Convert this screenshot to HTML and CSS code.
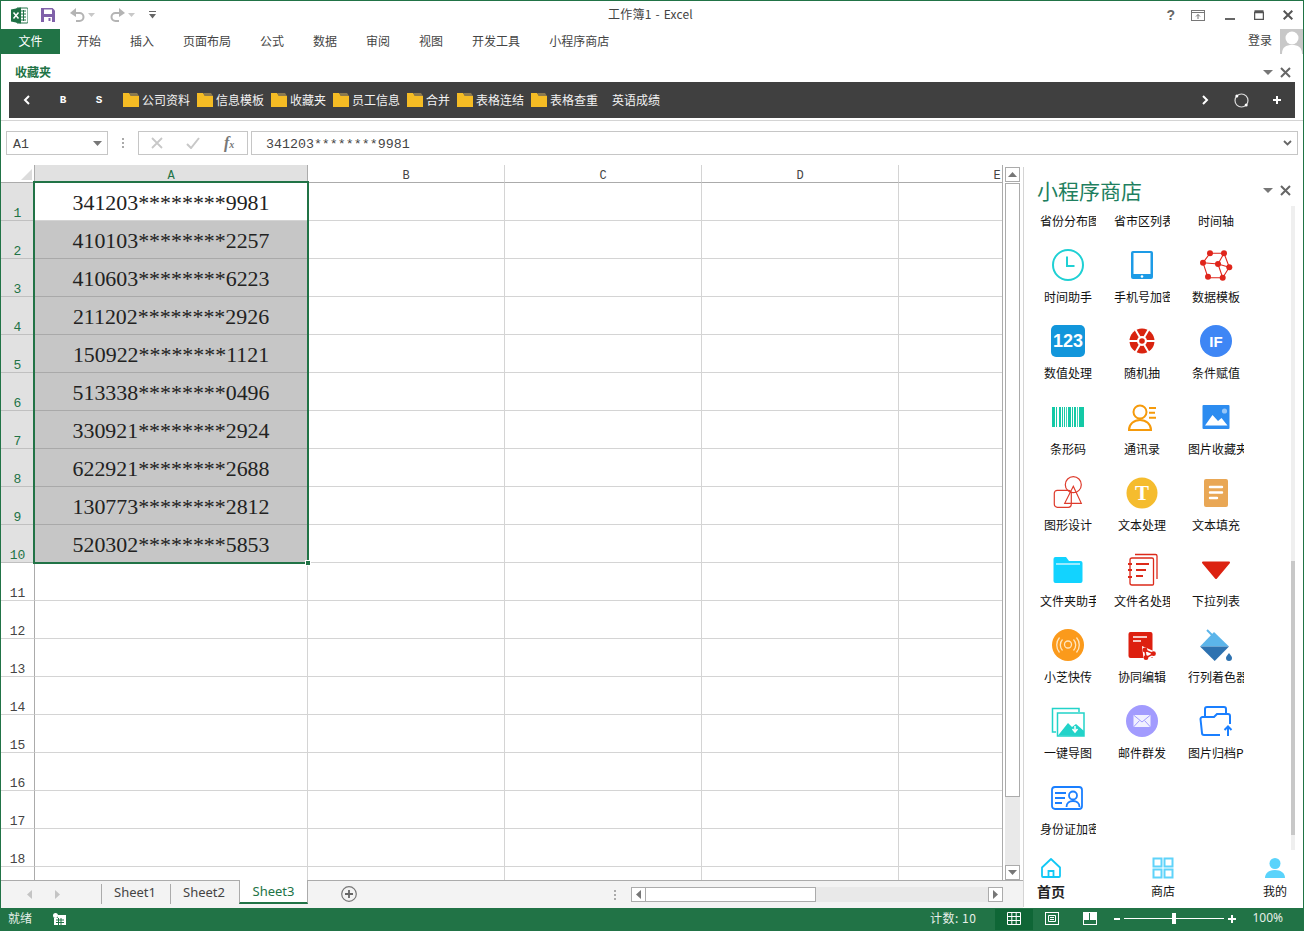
FILE: index.html
```html
<!DOCTYPE html>
<html lang="zh-CN">
<head>
<meta charset="utf-8">
<title>工作簿1 - Excel</title>
<link rel="stylesheet" href="styles.css">
</head>
<body>
<div class="app">
  <header class="titlebar">
    <div class="qat">
      <svg class="xl" width="17" height="17" viewBox="0 0 17 17"><path d="M6 1h10a1 1 0 0 1 1 1v13a1 1 0 0 1-1 1H6z" fill="#fff" stroke="#217346"/><path d="M10 4h5M10 7h5M10 10h5M10 13h5M12.5 3v11" stroke="#217346" fill="none"/><path d="M0 2.500 10 .5v16L0 14.500z" fill="#1e7145"/><path d="M2.500 5.500 7.500 11.500M7.500 5.500 2.500 11.500" stroke="#fff" stroke-width="1.500"/></svg>
      <svg class="save" width="14" height="14" viewBox="0 0 14 14"><path d="M0 0h11.500L14 2.500V14H0z" fill="#8061a9"/><rect x="3" y="1.500" width="8" height="4.500" fill="#fff"/><rect x="3" y="9" width="8" height="5" fill="#fff"/><rect x="7.500" y="10" width="2" height="3" fill="#8061a9"/></svg>
      <svg class="undo" width="15" height="14" viewBox="0 0 15 14"><path d="M3 5h6.500a4 4 0 0 1 0 8H6" fill="none" stroke="#b4b4b4" stroke-width="2"/><path d="M6 0v9L0 5z" fill="#b4b4b4"/></svg>
      <svg class="drop" width="7" height="4" viewBox="0 0 7 4"><path d="M0 0h7L3.500 4z" fill="#c8c8c8"/></svg>
      <svg class="redo" width="15" height="14" viewBox="0 0 15 14"><path d="M12 5H5.500a4 4 0 0 0 0 8H9" fill="none" stroke="#b4b4b4" stroke-width="2"/><path d="M9 0v9l6-4z" fill="#b4b4b4"/></svg>
      <svg class="drop" width="7" height="4" viewBox="0 0 7 4"><path d="M0 0h7L3.500 4z" fill="#c8c8c8"/></svg>
      <svg class="custom" width="7" height="8" viewBox="0 0 7 8"><path d="M0 0h7v1H0zM0 3h7L3.500 7.500z" fill="#666"/></svg>
    </div>
    <div class="doc-title">工作簿1 - Excel</div>
    <div class="win-ctrl">
      <span class="help">?</span>
      <svg class="ribbon-ico" width="14" height="11" viewBox="0 0 14 11"><rect x=".5" y=".5" width="13" height="10" fill="none" stroke="#777"/><path d="M.5 2.500h13M7 9V4.500M5 6.500l2-2 2 2" fill="none" stroke="#777"/></svg>
      <svg width="10" height="11" viewBox="0 0 10 11"><path d="M0 8h10v2H0z" fill="#666"/></svg>
      <svg width="10" height="10" viewBox="0 0 10 10"><path d="M.5 2.500h9v7h-9zM.5 1h9" fill="none" stroke="#555" stroke-width="1.500"/></svg>
      <svg width="10" height="10" viewBox="0 0 10 10"><path d="M.7.7l8.600 8.600M9.300.7.700 9.300" stroke="#555" stroke-width="2"/></svg>
    </div>
  </header>

  <nav class="ribbon">
    <div class="file-tab">文件</div>
    <div class="tabs">
      <span>开始</span><span>插入</span><span>页面布局</span><span>公式</span><span>数据</span><span>审阅</span><span>视图</span><span>开发工具</span><span>小程序商店</span>
    </div>
    <div class="account">
      <span class="login">登录</span>
      <div class="avatar"><svg width="24" height="25" viewBox="0 0 24 25"><circle cx="12" cy="9" r="6.500" fill="#fff"/><path d="M2 25c0-7 4-9 10-9s10 2 10 9z" fill="#fff"/></svg></div>
    </div>
  </nav>

  <section class="favs">
    <div class="favs-head">
      <span class="favs-title">收藏夹</span>
      <div class="pane-ctrl">
        <svg width="10" height="5" viewBox="0 0 10 5"><path d="M0 0h10L5 5z" fill="#777"/></svg>
        <svg width="11" height="11" viewBox="0 0 11 11"><path d="M1 1l9 9M10 1l-9 9" stroke="#666" stroke-width="2"/></svg>
      </div>
    </div>
    <div class="favs-bar">
      <div class="bar-btn"><svg width="8" height="10" viewBox="0 0 8 10"><path d="M6 1 2 5l4 4" fill="none" stroke="#fff" stroke-width="2"/></svg></div>
      <div class="bar-btn letter">B</div>
      <div class="bar-btn letter">S</div>
      <div class="fav-list">
        <span class="fav"><svg class="folder" width="16" height="14" viewBox="0 0 16 14"><path d="M0 0h6l2 3h8v11H0z" fill="#f5bc24"/><path d="M6 0h8l2 3H8z" fill="#8c7a4e"/></svg><b>公司资料</b></span>
        <span class="fav"><svg class="folder" width="16" height="14" viewBox="0 0 16 14"><path d="M0 0h6l2 3h8v11H0z" fill="#f5bc24"/><path d="M6 0h8l2 3H8z" fill="#8c7a4e"/></svg><b>信息模板</b></span>
        <span class="fav"><svg class="folder" width="16" height="14" viewBox="0 0 16 14"><path d="M0 0h6l2 3h8v11H0z" fill="#f5bc24"/><path d="M6 0h8l2 3H8z" fill="#8c7a4e"/></svg><b>收藏夹</b></span>
        <span class="fav"><svg class="folder" width="16" height="14" viewBox="0 0 16 14"><path d="M0 0h6l2 3h8v11H0z" fill="#f5bc24"/><path d="M6 0h8l2 3H8z" fill="#8c7a4e"/></svg><b>员工信息</b></span>
        <span class="fav"><svg class="folder" width="16" height="14" viewBox="0 0 16 14"><path d="M0 0h6l2 3h8v11H0z" fill="#f5bc24"/><path d="M6 0h8l2 3H8z" fill="#8c7a4e"/></svg><b>合并</b></span>
        <span class="fav"><svg class="folder" width="16" height="14" viewBox="0 0 16 14"><path d="M0 0h6l2 3h8v11H0z" fill="#f5bc24"/><path d="M6 0h8l2 3H8z" fill="#8c7a4e"/></svg><b>表格连结</b></span>
        <span class="fav"><svg class="folder" width="16" height="14" viewBox="0 0 16 14"><path d="M0 0h6l2 3h8v11H0z" fill="#f5bc24"/><path d="M6 0h8l2 3H8z" fill="#8c7a4e"/></svg><b>表格查重</b></span>
        <span class="fav plain"><b>英语成绩</b></span>
      </div>
      <div class="bar-right">
        <div class="bar-btn"><svg width="8" height="10" viewBox="0 0 8 10"><path d="M2 1l4 4-4 4" fill="none" stroke="#fff" stroke-width="2"/></svg></div>
        <div class="bar-btn"><svg width="15" height="15" viewBox="0 0 15 15"><circle cx="7.500" cy="7.500" r="6.500" fill="none" stroke="#ddd" stroke-width="1.200"/><circle cx="2.800" cy="3" r="1.500" fill="#fff"/><circle cx="12.200" cy="12" r="1.500" fill="#fff"/></svg></div>
        <div class="bar-btn"><svg width="8" height="8" viewBox="0 0 8 8"><path d="M4 0v8M0 4h8" stroke="#fff" stroke-width="2"/></svg></div>
      </div>
    </div>
  </section>

  <section class="formula">
    <div class="namebox"><span class="mono-text">A1</span><svg width="9" height="5" viewBox="0 0 9 5"><path d="M0 0h9L4.500 5z" fill="#777"/></svg></div>
    <div class="fdots"><i></i><i></i><i></i></div>
    <div class="fbtns">
      <svg width="12" height="12" viewBox="0 0 12 12"><path d="M1 1l10 10M11 1 1 11" stroke="#c8c8c8" stroke-width="1.800"/></svg>
      <svg width="14" height="12" viewBox="0 0 14 12"><path d="M1 7l4 4 8-10" fill="none" stroke="#c8c8c8" stroke-width="2"/></svg>
      <span class="fx">f<small>x</small></span>
    </div>
    <div class="finput"><span class="mono-text">341203********9981</span><svg width="9" height="6" viewBox="0 0 9 6"><path d="M1 1l3.500 3.500L8 1" fill="none" stroke="#666" stroke-width="1.800"/></svg></div>
  </section>

  <main class="workspace">
    <div class="book">
      <div class="book-top">
        <div class="sheet">
          <div class="corner"><svg width="11" height="11" viewBox="0 0 11 11"><path d="M11 0v11H0z" fill="#dcdcdc"/></svg></div>
          <div class="ch on">A</div><div class="ch">B</div><div class="ch">C</div><div class="ch">D</div><div class="ch">E</div>

          <div class="rh on">1</div><div class="c v top">341203********9981</div><div class="c"></div><div class="c"></div><div class="c"></div><div class="c"></div>
          <div class="rh on">2</div><div class="c v sel">410103********2257</div><div class="c"></div><div class="c"></div><div class="c"></div><div class="c"></div>
          <div class="rh on">3</div><div class="c v sel">410603********6223</div><div class="c"></div><div class="c"></div><div class="c"></div><div class="c"></div>
          <div class="rh on">4</div><div class="c v sel">211202********2926</div><div class="c"></div><div class="c"></div><div class="c"></div><div class="c"></div>
          <div class="rh on">5</div><div class="c v sel">150922********1121</div><div class="c"></div><div class="c"></div><div class="c"></div><div class="c"></div>
          <div class="rh on">6</div><div class="c v sel">513338********0496</div><div class="c"></div><div class="c"></div><div class="c"></div><div class="c"></div>
          <div class="rh on">7</div><div class="c v sel">330921********2924</div><div class="c"></div><div class="c"></div><div class="c"></div><div class="c"></div>
          <div class="rh on">8</div><div class="c v sel">622921********2688</div><div class="c"></div><div class="c"></div><div class="c"></div><div class="c"></div>
          <div class="rh on">9</div><div class="c v sel">130773********2812</div><div class="c"></div><div class="c"></div><div class="c"></div><div class="c"></div>
          <div class="rh on">10</div><div class="c v sel">520302********5853</div><div class="c"></div><div class="c"></div><div class="c"></div><div class="c"></div>
          <div class="rh">11</div><div class="c"></div><div class="c"></div><div class="c"></div><div class="c"></div><div class="c"></div>
          <div class="rh">12</div><div class="c"></div><div class="c"></div><div class="c"></div><div class="c"></div><div class="c"></div>
          <div class="rh">13</div><div class="c"></div><div class="c"></div><div class="c"></div><div class="c"></div><div class="c"></div>
          <div class="rh">14</div><div class="c"></div><div class="c"></div><div class="c"></div><div class="c"></div><div class="c"></div>
          <div class="rh">15</div><div class="c"></div><div class="c"></div><div class="c"></div><div class="c"></div><div class="c"></div>
          <div class="rh">16</div><div class="c"></div><div class="c"></div><div class="c"></div><div class="c"></div><div class="c"></div>
          <div class="rh">17</div><div class="c"></div><div class="c"></div><div class="c"></div><div class="c"></div><div class="c"></div>
          <div class="rh">18</div><div class="c"></div><div class="c"></div><div class="c"></div><div class="c"></div><div class="c"></div>
          <div class="rh"></div><div class="c"></div><div class="c"></div><div class="c"></div><div class="c"></div><div class="c"></div>

          <div class="selection"><span class="handle"></span></div>
        </div>
        <div class="vscroll">
          <div class="sb-btn"><svg width="9" height="5" viewBox="0 0 9 5"><path d="M0 5h9L4.500 0z" fill="#777"/></svg></div>
          <div class="sb-thumb"></div>
          <div class="sb-track"></div>
          <div class="sb-btn"><svg width="9" height="5" viewBox="0 0 9 5"><path d="M0 0h9L4.500 5z" fill="#777"/></svg></div>
        </div>
      </div>
      <div class="sheetbar">
        <div class="sheet-nav">
          <svg width="5" height="9" viewBox="0 0 5 9"><path d="M5 0v9L0 4.500z" fill="#c4c4c4"/></svg>
          <svg width="5" height="9" viewBox="0 0 5 9"><path d="M0 0v9l5-4.500z" fill="#c4c4c4"/></svg>
        </div>
        <div class="stab">Sheet1</div>
        <div class="stab">Sheet2</div>
        <div class="stab active">Sheet3</div>
        <svg class="add" width="16" height="16" viewBox="0 0 16 16"><circle cx="8" cy="8" r="7.300" fill="none" stroke="#777" stroke-width="1.200"/><path d="M8 4v8M4 8h8" stroke="#666" stroke-width="1.800"/></svg>
        <div class="hdots"><i></i><i></i><i></i></div>
        <div class="hscroll">
          <div class="hb"><svg width="5" height="9" viewBox="0 0 5 9"><path d="M5 0v9L0 4.500z" fill="#777"/></svg></div>
          <div class="hthumb"></div>
          <div class="htrack"></div>
          <div class="hb"><svg width="5" height="9" viewBox="0 0 5 9"><path d="M0 0v9l5-4.500z" fill="#777"/></svg></div>
        </div>
      </div>
    </div>

    <aside class="pane">
      <div class="pane-head">
        <h2>小程序商店</h2>
        <div class="pane-ctrl">
          <svg width="10" height="5" viewBox="0 0 10 5"><path d="M0 0h10L5 5z" fill="#777"/></svg>
          <svg width="11" height="11" viewBox="0 0 11 11"><path d="M1 1l9 9M10 1l-9 9" stroke="#666" stroke-width="2"/></svg>
        </div>
      </div>
      <div class="pane-body">
        <div class="apps">
          <div class="app-item"><div class="label">省份分布图</div></div>
          <div class="app-item"><div class="label">省市区列表</div></div>
          <div class="app-item"><div class="label">时间轴</div></div>

          <div class="app-item"><svg class="ico" viewBox="0 0 34 34"><circle cx="17" cy="17" r="15" fill="none" stroke="#1fd0d4" stroke-width="2"/><path d="M16 8.500V18h7.500" fill="none" stroke="#1fd0d4" stroke-width="2"/></svg><div class="label">时间助手</div></div>
          <div class="app-item"><svg class="ico" viewBox="0 0 34 34"><rect x="6" y="3" width="22" height="28" rx="2" fill="#1d9be6"/><rect x="8.500" y="5" width="17" height="21" fill="#fff"/><circle cx="17" cy="28.500" r="1.300" fill="#fff"/></svg><div class="label">手机号加密</div></div>
          <div class="app-item"><svg class="ico" viewBox="0 0 34 34"><path d="M11 5.300H25L30.300 19.300 23.700 29.700H9L4 14.700zM4 14.700 19 16 25 5.300M19 16 30.300 19.300M19 16 23.700 29.700" fill="none" stroke="#e0251b" stroke-width="1.100"/><g fill="#e0251b"><circle cx="11" cy="5.300" r="3"/><circle cx="25" cy="5.300" r="3"/><circle cx="4" cy="14.700" r="3"/><circle cx="19" cy="16" r="3"/><circle cx="30.300" cy="19.300" r="3"/><circle cx="9" cy="28.700" r="3"/><circle cx="23.700" cy="29.700" r="3"/></g></svg><div class="label">数据模板</div></div>

          <div class="app-item"><svg class="ico" viewBox="0 0 34 34"><rect x="0" y="1" width="34" height="32" rx="5" fill="#1296db"/><text x="17" y="23" class="ico-text n123">123</text></svg><div class="label">数值处理</div></div>
          <div class="app-item"><svg class="ico" viewBox="0 0 34 34"><circle cx="17" cy="17" r="12.500" fill="#d9230f"/><path d="M4 17h26M10.500 5.700l13 22.600M23.500 5.700l-13 22.600" stroke="#fff" stroke-width="2"/><circle cx="17" cy="17" r="5" fill="#fff"/><circle cx="17" cy="17" r="2.800" fill="#d9230f"/></svg><div class="label">随机抽</div></div>
          <div class="app-item"><svg class="ico" viewBox="0 0 34 34"><circle cx="17" cy="17" r="16" fill="#3e86f5"/><text x="17" y="22.500" class="ico-text nif">IF</text></svg><div class="label">条件赋值</div></div>

          <div class="app-item"><svg class="ico" viewBox="0 0 34 34"><path d="M1 7h3v20H1zM5 7h1v20H5zM8 7h2v20H8zM11 7h1v20h-1zM13 7h1v20h-1zM15 7h.8v20H15zM17 7h3v20h-3zM21 7h1v20h-1zM23 7h2v20h-2zM26 7h.8v20H26zM28 7h5v20h-5z" fill="#13c9a6"/></svg><div class="label">条形码</div></div>
          <div class="app-item"><svg class="ico" viewBox="0 0 34 34"><circle cx="15" cy="12" r="6.500" fill="none" stroke="#f59a0b" stroke-width="2"/><path d="M4 30c0-6 5-10 11-10s11 4 11 10z" fill="none" stroke="#f59a0b" stroke-width="2"/><path d="M24 8h7M24 12.700h6M24 17.700h7" stroke="#f59a0b" stroke-width="2"/></svg><div class="label">通讯录</div></div>
          <div class="app-item"><svg class="ico" viewBox="0 0 34 34"><rect x="3.500" y="5" width="27" height="24" rx="1" fill="#2c8cf0"/><path d="M6 25.500 13.500 15 19 21l3.500-3 6 7.500z" fill="#fff"/><circle cx="25.500" cy="11" r="2.600" fill="#fff" fill-opacity=".5"/></svg><div class="label">图片收藏夹</div></div>

          <div class="app-item"><svg class="ico" viewBox="0 0 34 34"><g fill="none" stroke="#de3b2c" stroke-width="1.200"><rect x="3.300" y="14.300" width="17" height="17" rx="3"/><circle cx="22.300" cy="8.700" r="8"/><path d="M22.300 10.300 30.300 27.300H13.700z"/></g></svg><div class="label">图形设计</div></div>
          <div class="app-item"><svg class="ico" viewBox="0 0 34 34"><circle cx="17" cy="17" r="15.500" fill="#f5bc2e"/><text x="17" y="24" class="ico-text nt">T</text></svg><div class="label">文本处理</div></div>
          <div class="app-item"><svg class="ico" viewBox="0 0 34 34"><rect x="5" y="3" width="24" height="28" rx="2" fill="#e9a755"/><path d="M11 11h12M11 16.500h12M11 22h7" stroke="#fff" stroke-width="2.400" stroke-linecap="round"/></svg><div class="label">文本填充</div></div>

          <div class="app-item"><svg class="ico" viewBox="0 0 34 34"><path d="M2.500 7a2 2 0 0 1 2-2H15l3 4h11.500a2 2 0 0 1 2 2v18a2 2 0 0 1-2 2h-25a2 2 0 0 1-2-2z" fill="#12d3ff"/><path d="M5 12h24" stroke="#c8f3ff" stroke-width="1.500"/></svg><div class="label">文件夹助手</div></div>
          <div class="app-item"><svg class="ico" viewBox="0 0 34 34"><g fill="none" stroke="#dc2a1a" stroke-width="1.300"><path d="M10 2.500h20.500a1.500 1.500 0 0 1 1.500 1.500v23"/><path d="M7 6h20a1.500 1.500 0 0 1 1.500 1.500V32a1 1 0 0 1-1 1H7a2 2 0 0 1-2-2V8a2 2 0 0 1 2-2z"/><path d="M3 12h4M3 18h4M3 25h4M11 12h13M11 18h10M11 24h7" stroke-width="1.800"/></g></svg><div class="label">文件名处理</div></div>
          <div class="app-item"><svg class="ico" viewBox="0 0 34 34"><path d="M4 10.500h26L17 26z" fill="#dc2211" stroke="#dc2211" stroke-width="2" stroke-linejoin="round"/></svg><div class="label">下拉列表</div></div>

          <div class="app-item"><svg class="ico" viewBox="0 0 34 34"><circle cx="17" cy="17" r="16" fill="#fb9a1b"/><g fill="none" stroke="#ffe6bf" stroke-width="1.300"><circle cx="17" cy="16.500" r="3.500"/><path d="M11.500 11.500a8 8 0 0 0 0 11M22.500 11.500a8 8 0 0 1 0 11M8.500 9.500a11.500 11.500 0 0 0 0 15M25.500 9.500a11.500 11.500 0 0 1 0 15"/></g></svg><div class="label">小芝快传</div></div>
          <div class="app-item"><svg class="ico" viewBox="0 0 34 34"><path d="M5.500 4h20a2 2 0 0 1 2 2v24H5.500a2 2 0 0 1-2-2V6a2 2 0 0 1 2-2z" fill="#dd1f0f"/><path d="M8 9h14M8 13h8" stroke="#fff" stroke-width="1.600"/><path d="M20 22l8.500 3.700-7.500 4z" fill="none" stroke="#fff" stroke-width="5"/><path d="M20 22l8.500 3.700-7.500 4z" fill="none" stroke="#dd1f0f" stroke-width="1.500"/><g fill="#dd1f0f"><circle cx="20" cy="22" r="2.400"/><circle cx="28.500" cy="25.700" r="2.400"/><circle cx="21" cy="29.700" r="2.400"/></g></svg><div class="label">协同编辑</div></div>
          <div class="app-item"><svg class="ico" viewBox="0 0 34 34"><path d="M1 18.500 15 4l15 14.500z" fill="#5cb5ea"/><path d="M1 18.500h29L15.700 33z" fill="#2e72b0"/><path d="M8 2l6 6" stroke="#5cb5ea" stroke-width="2"/><path d="M30 25c2 2.500 3 3.500 3 5a3 3 0 0 1-6 0c0-1.500 1-2.500 3-5z" fill="#2e72b0"/></svg><div class="label">行列着色器</div></div>

          <div class="app-item"><svg class="ico" viewBox="0 0 34 34"><path d="M5 28H1.500V4.500H28V8" fill="none" stroke="#22d3c9" stroke-width="1.500"/><rect x="6.500" y="9" width="26.500" height="23" fill="#fff" stroke="#22d3c9" stroke-width="1.500"/><path d="M7 31.500 17 19l4 4 4-3 8 7v5z" fill="#22d3c9"/><path d="M24 22v5M21.500 25l2.500 3 2.500-3" fill="none" stroke="#fff" stroke-width="1.500"/></svg><div class="label">一键导图</div></div>
          <div class="app-item"><svg class="ico" viewBox="0 0 34 34"><circle cx="17" cy="17" r="16" fill="#a29bfe"/><rect x="8.500" y="11" width="17" height="12" fill="#fff" fill-opacity=".85"/><path d="M8.500 11 17 18l8.500-7M8.500 23l6-6.500M25.500 23l-6-6.500" fill="none" stroke="#a29bfe" stroke-width="1"/></svg><div class="label">邮件群发</div></div>
          <div class="app-item"><svg class="ico" viewBox="0 0 34 34"><g fill="none" stroke="#1a7fff" stroke-width="2"><path d="M6 13V5a2 2 0 0 1 2-2h17a2 2 0 0 1 2 2v4"/><path d="M21 31H5a2 2 0 0 1-2-2L1.500 15a2 2 0 0 1 2-2H15l3-3h11a2 2 0 0 1 2 2v8"/><path d="M29 32v-9M25.500 26l3.500-3.500 3.500 3.500"/></g></svg><div class="label">图片归档PDF</div></div>

          <div class="app-item"><svg class="ico" viewBox="0 0 34 34"><g fill="none" stroke="#1a7fff" stroke-width="1.800"><rect x="1" y="7" width="30" height="22" rx="3"/><path d="M4 13h11M4 18h10M4 23h7"/><circle cx="22" cy="15.500" r="4"/><path d="M15.500 27c0-4 3-6 6.500-6s6.500 2 6.500 6"/></g></svg><div class="label">身份证加密</div></div>
        </div>
        <div class="pane-scroll"><div class="pane-thumb"></div></div>
      </div>
      <div class="pane-nav">
        <div class="nav-item current"><svg width="22" height="22" viewBox="0 0 22 22"><path d="M11 2 2 10.500V19a1 1 0 0 0 1 1h16a1 1 0 0 0 1-1v-8.500z" fill="none" stroke="#12c8f5" stroke-width="1.800" stroke-linejoin="round"/><path d="M8.500 20v-6h5v6" fill="none" stroke="#12c8f5" stroke-width="1.800"/></svg><span>首页</span></div>
        <div class="nav-item"><svg width="22" height="22" viewBox="0 0 22 22"><g fill="none" stroke="#5fd3fa" stroke-width="2"><rect x="1.500" y="1.500" width="8" height="8"/><rect x="12.500" y="1.500" width="8" height="8"/><rect x="1.500" y="12.500" width="8" height="8"/><rect x="12.500" y="12.500" width="8" height="8"/></g></svg><span>商店</span></div>
        <div class="nav-item"><svg width="22" height="22" viewBox="0 0 22 22"><circle cx="11" cy="6.500" r="5.500" fill="#5ad3fb"/><path d="M1 21c0-5 4-8 10-8s10 3 10 8z" fill="#5ad3fb"/></svg><span>我的</span></div>
      </div>
    </aside>
  </main>

  <footer class="status">
    <span class="ready">就绪</span>
    <svg class="macro" width="13" height="12" viewBox="0 0 13 12"><path d="M5 2h8v10H1V5h4z" fill="#fff"/><circle cx="2.500" cy="2.500" r="2.500" fill="#fff"/><path d="M3 7h8M3 9.500h8M5.500 5v7M8 5v7" stroke="#217346"/></svg>
    <span class="count">计数: 10</span>
    <div class="view active"><svg width="14" height="13" viewBox="0 0 14 13"><path d="M.5.500h13v12H.5zM.5 4.500h13M.5 8.500h13M4.800.500v12M9.200.500v12" fill="none" stroke="#fff"/></svg></div>
    <div class="view"><svg width="14" height="13" viewBox="0 0 14 13"><rect x=".5" y=".5" width="13" height="12" fill="none" stroke="#fff"/><path d="M3.500 3.500h7v6h-7zM5 5.500h4M5 7.500h4" fill="none" stroke="#fff"/></svg></div>
    <div class="view"><svg width="14" height="13" viewBox="0 0 14 13"><rect x=".5" y=".5" width="13" height="12" fill="none" stroke="#fff"/><path d="M1 1h5v7H1zM7 1h6v7H7z" fill="#fff"/></svg></div>
    <svg class="zm" width="6" height="2" viewBox="0 0 6 2"><path d="M0 0h6v2H0z" fill="#fff"/></svg>
    <div class="slider"><span></span></div>
    <svg class="zp" width="8" height="8" viewBox="0 0 8 8"><path d="M4 0v8M0 4h8" stroke="#fff" stroke-width="2"/></svg>
    <span class="zoom">100%</span>
  </footer>
</div>
</body>
</html>
```

FILE: styles.css
```css
* { box-sizing: border-box; }
html, body { margin: 0; padding: 0; }
body {
  width: 1304px;
  height: 931px;
  overflow: hidden;
  background: #fff;
  font-family: "Noto Sans CJK SC", "Liberation Sans", sans-serif;
  font-size: 12px;
  color: #444;
}
svg { display: block; flex: none; }

.app {
  width: 1304px;
  height: 931px;
  display: flex;
  flex-direction: column;
  border: 1px solid #217346;
  border-bottom: 0;
  overflow: hidden;
}

/* Title bar */
.titlebar {
  height: 28px;
  flex: none;
  display: grid;
  grid-template-columns: 1fr auto 1fr;
  align-items: center;
}
.qat { display: flex; align-items: center; padding-left: 10px; }
.qat .save { margin-left: 13px; }
.qat .undo { margin-left: 15px; }
.qat .drop { margin-left: 3px; }
.qat .redo { margin-left: 15px; }
.qat .custom { margin-left: 14px; }
.doc-title {
  color: #444;
  line-height: 26px;
  padding: 0 3px 2px 0;
  white-space: nowrap;
  word-spacing: 1px;
  letter-spacing: .2px;
}
.win-ctrl {
  display: flex;
  align-items: center;
  justify-content: flex-end;
  gap: 19px;
  padding-right: 10px;
}
.help { font: bold 14px "Liberation Sans", sans-serif; color: #666; margin-right: -3px; }
.ribbon-ico { margin-right: 1px; }

/* Ribbon */
.ribbon { height: 25px; flex: none; display: flex; align-items: center; }
.file-tab {
  width: 59px;
  height: 25px;
  line-height: 23px;
  text-align: center;
  background: #217346;
  color: #fff;
}
.tabs { display: flex; gap: 29px; padding: 0 0 2px 17px; }
.account { margin-left: auto; display: flex; align-items: center; gap: 7px; margin-right: -1px; }
.login { margin-bottom: 5px; margin-right: 1px; }
.avatar { width: 24px; height: 25px; background: #c8c8c8; overflow: hidden; }

/* Favourites */
.favs { flex: none; border-bottom: 1px solid #d4d4d4; height: 67px; }
.favs-head {
  height: 28px;
  display: flex;
  align-items: flex-end;
  justify-content: space-between;
  padding: 0 12px 1px 14px;
}
.favs-title { color: #217346; font-weight: 700; line-height: 18px; }
.pane-ctrl { display: flex; align-items: center; gap: 7px; height: 18px; }
.favs-bar {
  margin: 0 8px 0 8px;
  height: 36px;
  background: #404040;
  color: #fff;
  display: flex;
  align-items: center;
}
.bar-btn { width: 36px; height: 36px; display: flex; align-items: center; justify-content: center; }
.letter { font: bold 11px "Liberation Mono", monospace; }
.fav-list { display: flex; align-items: center; gap: 7px; margin-left: 6px; }
.fav { display: flex; align-items: center; gap: 3px; white-space: nowrap; color: #f2f2f2; }
.fav b { font-weight: 400; margin-top: -2px; }
.fav.plain { margin-left: 7px; }
.bar-right { margin-left: auto; display: flex; }

/* Formula bar */
.formula {
  flex: none;
  height: 44px;
  padding: 10px 5px 10px 5px;
  display: flex;
  align-items: stretch;
}
.namebox, .fbtns, .finput { border: 1px solid #c6c6c6; display: flex; align-items: center; }
.namebox {
  width: 102px;
  justify-content: space-between;
  padding: 0 5px 0 6px;
  font: 13.200px "Liberation Mono", monospace;
  color: #444;
}
.mono-text { margin-top: 2px; }
.fdots { width: 30px; display: flex; flex-direction: column; align-items: center; justify-content: center; gap: 2px; }
.fdots i { width: 2px; height: 2px; background: #aaa; }
.fbtns { width: 110px; gap: 23px; padding-left: 12px; }
.fx { font: italic bold 16px "Liberation Serif", serif; color: #777; margin-left: 1px; }
.fx small { font-size: 10px; }
.finput {
  flex: 1;
  margin-left: 3px;
  justify-content: space-between;
  padding: 0 5px 0 14px;
  font: 13.300px "Liberation Mono", monospace;
  color: #444;
}

/* Workspace */
.workspace { flex: 1; min-height: 0; display: flex; }
.book { width: 1022px; display: flex; flex-direction: column; }
.book-top { height: 716px; display: flex; border-bottom: 1px solid #ababab; }

.sheet {
  position: relative;
  width: 1002px;
  height: 715px;
  overflow: hidden;
  border-right: 1px solid #ababab;
  display: grid;
  grid-template-columns: 34px 273px 197px 197px 197px 197px;
  grid-template-rows: 18px repeat(19, 38px);
}
.corner {
  border-right: 1px solid #ababab;
  border-bottom: 1px solid #ababab;
  display: flex;
  align-items: flex-end;
  justify-content: flex-end;
  padding: 0 2px 2px 0;
}
.ch {
  border-right: 1px solid #d4d4d4;
  border-bottom: 1px solid #ababab;
  font: 12px/23px "Liberation Mono", monospace;
  text-align: center;
  color: #444;
  overflow: hidden;
}
.ch.on { background: #e1e1e1; color: #217346; border-right-color: #ababab; }
.rh {
  border-right: 1px solid #ababab;
  border-bottom: 1px solid #d4d4d4;
  font: 13px/16px "Liberation Mono", monospace;
  text-align: center;
  padding-top: 23px;
  color: #444;
}
.rh.on { background: #e1e1e1; color: #217346; border-bottom-color: #c0c0c0; }
.c { border-right: 1px solid #d4d4d4; border-bottom: 1px solid #d4d4d4; }
.c.v {
  font: 21.900px/40px "Liberation Serif", serif;
  color: #222;
  text-align: center;
  white-space: nowrap;
}
.c.sel { background: #c6c6c6; border-bottom-color: #a9a9a9; }
.selection {
  position: absolute;
  left: 32px;
  top: 16px;
  width: 276px;
  height: 383px;
  border: 2px solid #217346;
}
.handle {
  position: absolute;
  right: -4px;
  bottom: -4px;
  width: 6px;
  height: 6px;
  background: #217346;
  border: 1px solid #fff;
}

/* Vertical scrollbar */
.vscroll { width: 19px; display: flex; flex-direction: column; padding: 2px 2px 0 2px; }
.sb-btn {
  width: 15px;
  height: 15px;
  flex: none;
  border: 1px solid #ababab;
  background: #fff;
  display: flex;
  align-items: center;
  justify-content: center;
}
.sb-thumb { height: 614px; flex: none; background: #fff; border: 1px solid #ababab; margin-top: 1px; }
.sb-track { flex: 1; background: #e9e9e9; }

/* Sheet tabs */
.sheetbar {
  flex: 1;
  background: #f3f3f3;
  display: flex;
  align-items: stretch;
  padding-right: 20px;
}
.sheet-nav { width: 100px; display: flex; align-items: center; gap: 23px; padding-left: 26px; }
.stab {
  width: 69px;
  height: 20px;
  margin-top: 3px;
  border-left: 1px solid #ababab;
  font: 13px/17px "Noto Sans", sans-serif;
  color: #444;
  text-align: center;
  padding-right: 2px;
}
.stab.active {
  height: 24px;
  margin-top: -1px;
  padding-top: 2px;
  padding-right: 0;
  background: #fff;
  color: #217346;
  line-height: 19px;
  border-left: 1px solid #ababab;
  border-right: 1px solid #ababab;
  border-bottom: 2px solid #217346;
}
.add { align-self: center; margin-left: 33px; margin-top: -1px; }
.hdots {
  margin-left: auto;
  width: 3px;
  display: flex;
  flex-direction: column;
  justify-content: center;
  gap: 2px;
  margin-right: 14px;
}
.hdots i { width: 2px; height: 2px; background: #aaa; }
.hscroll { width: 372px; height: 15px; align-self: center; display: flex; margin-top: -1px; }
.hb {
  width: 15px;
  flex: none;
  background: #fff;
  border: 1px solid #ababab;
  display: flex;
  align-items: center;
  justify-content: center;
}
.hthumb { width: 170px; flex: none; background: #fff; border: 1px solid #ababab; border-left: 0; }
.htrack { flex: 1; background: #e9e9e9; }

/* Task pane */
.pane {
  width: 280px;
  margin-top: 2px;
  margin-bottom: 1px;
  border-left: 1px solid #d4d4d4;
  display: flex;
  flex-direction: column;
}
.pane-head {
  height: 39px;
  flex: none;
  display: flex;
  align-items: center;
  justify-content: space-between;
  padding: 6px 12px 0 13px;
}
.pane-head h2 {
  margin: 0;
  font-size: 21px;
  font-weight: 400;
  color: #1f7f60;
  line-height: 28px;
}
.pane-head .pane-ctrl { margin-top: 2px; }
.pane-body { flex: 1; min-height: 0; display: flex; position: relative; }
.apps {
  width: 267px;
  height: 644px;
  overflow: hidden;
  padding: 7px 0 0 7px;
  display: grid;
  grid-template-columns: repeat(3, 74px);
  grid-template-rows: 16px;
  grid-auto-rows: 58px;
  row-gap: 18px;
  align-content: start;
}
.app-item { display: flex; flex-direction: column; align-items: center; }
.ico { width: 34px; height: 34px; margin: 1px 0 7px; overflow: visible; }
.ico-text { text-anchor: middle; fill: #fff; font-family: "Liberation Sans", sans-serif; font-weight: 700; }
.n123 { font-size: 18px; }
.nif { font-size: 15px; }
.nt { font-family: "Liberation Serif", serif; font-size: 21px; }
.label {
  width: 56px;
  height: 16px;
  line-height: 16px;
  color: #111;
  text-align: center;
  white-space: nowrap;
  overflow: hidden;
}
.pane-scroll { width: 4px; height: 644px; background: #efefef; flex: none; padding-top: 355px; }
.pane-thumb { height: 274px; background: #c8c8c8; }
.pane-nav {
  flex: none;
  height: 56px;
  display: flex;
  justify-content: space-between;
  padding: 0 14px 0 13px;
}
.nav-item { width: 28px; display: flex; flex-direction: column; align-items: center; color: #111; padding-top: 6px; }
.nav-item span { line-height: 18px; margin-top: 3px; white-space: nowrap; }
.nav-item.current span { font-size: 14px; font-weight: 700; color: #222; }

/* Status bar */
.status {
  height: 23px;
  flex: none;
  background: #217346;
  color: #e6efe9;
  display: flex;
  align-items: center;
  margin: 0 -1px;
}
.ready { margin-left: 8px; padding-bottom: 4px; }
.macro { margin: 0 0 2px 21px; }
.count {
  margin-left: auto;
  white-space: nowrap;
  margin-right: 19px;
  padding-bottom: 4px;
  letter-spacing: .5px;
}
.view { width: 38px; height: 21px; padding-bottom: 2px; display: flex; align-items: center; justify-content: center; }
.view.active { background: #0f6636; }
.zm { margin: 0 0 2px 5px; }
.slider { position: relative; width: 100px; height: 1px; margin: 0 0 2px 4px; background: #fff; }
.slider span { position: absolute; left: 48px; top: -5px; width: 4px; height: 11px; background: #fff; }
.zp { margin: 0 0 2px 4px; }
.zoom { margin: 0 21px 0 16px; padding-bottom: 4px; font-family: "Noto Sans", sans-serif; }
```
